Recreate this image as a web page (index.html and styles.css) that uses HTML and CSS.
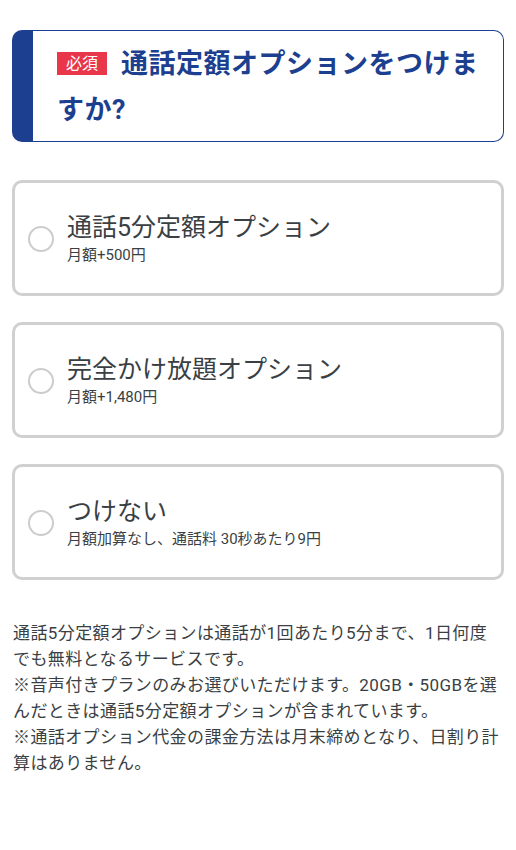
FILE: index.html
```html
<!DOCTYPE html>
<html lang="ja">
<head>
  <meta charset="UTF-8">
  <title>通話定額オプション</title>
  <link rel="stylesheet" href="styles.css">
</head>
<body>

  <div class="page">
    <!-- 見出し -->
    <div class="question">
      <h2><span class="required">必須</span>通話定額オプションをつけますか?</h2>
    </div>

    <!-- 選択肢 -->
    <div class="options">
      <label class="option">
        <span class="radio"></span>
        <span class="option-text">
          <span class="option-title">通話5分定額オプション</span>
          <span class="option-sub">月額+500円</span>
        </span>
      </label>
      <label class="option">
        <span class="radio"></span>
        <span class="option-text">
          <span class="option-title">完全かけ放題オプション</span>
          <span class="option-sub">月額+1,480円</span>
        </span>
      </label>
      <label class="option">
        <span class="radio"></span>
        <span class="option-text">
          <span class="option-title">つけない</span>
          <span class="option-sub">月額加算なし、通話料 30秒あたり9円</span>
        </span>
      </label>
    </div>

    <p class="note">
      通話5分定額オプションは通話が1回あたり5分まで、1日何度<br>でも無料となるサービスです。<br>
      ※音声付きプランのみお選びいただけます。20GB・50GBを選<br>んだときは通話5分定額オプションが含まれています。<br>
      ※通話オプション代金の課金方法は月末締めとなり、日割り計<br>算はありません。
    </p>
  </div>

</body>
</html>
```

FILE: styles.css
```css
body {
  margin: 0;
  font-family: Roboto, "Noto Sans CJK JP", sans-serif;
  color: #333;
  background: #fff;
}

.page {
  padding: 30px 12px 40px;
}

.question {
  border: 1px solid #1d3f8f;
  border-left: 21px solid #1d3f8f;
  border-radius: 10px;
  padding: 10px 16px 8px 24px;
}

.question h2 {
  margin: 0;
  font-size: 27px;
  line-height: 46px;
  letter-spacing: 0.5px;
  font-weight: bold;
  color: #1d3f8f;
}

.required {
  display: inline-block;
  vertical-align: 4px;
  background: #e8374a;
  color: #fff;
  font-size: 16px;
  font-weight: normal;
  line-height: 23px;
  letter-spacing: 0;
  padding: 0 9px;
  margin-right: 14px;
}

.options {
  display: flex;
  flex-direction: column;
  gap: 26px;
  margin-top: 38px;
}

.option {
  display: flex;
  align-items: center;
  height: 110px;
  border: 3px solid #d0d0d0;
  border-radius: 10px;
  padding: 0 13px;
  cursor: pointer;
}

.radio {
  width: 22px;
  height: 22px;
  border: 2px solid #cccccc;
  border-radius: 50%;
  flex-shrink: 0;
  margin-top: 2px;
}

.option-text {
  display: flex;
  flex-direction: column;
  margin-left: 13px;
}

.option-title {
  font-size: 25px;
  line-height: 34px;
  color: #3a3f44;
}

.option-sub {
  font-size: 15px;
  line-height: 20px;
  color: #3a3f44;
}

.note {
  margin: 40px -6px 0 1px;
  font-size: 17px;
  line-height: 26px;
  letter-spacing: 0.4px;
  color: #3a3f44;
}
```
